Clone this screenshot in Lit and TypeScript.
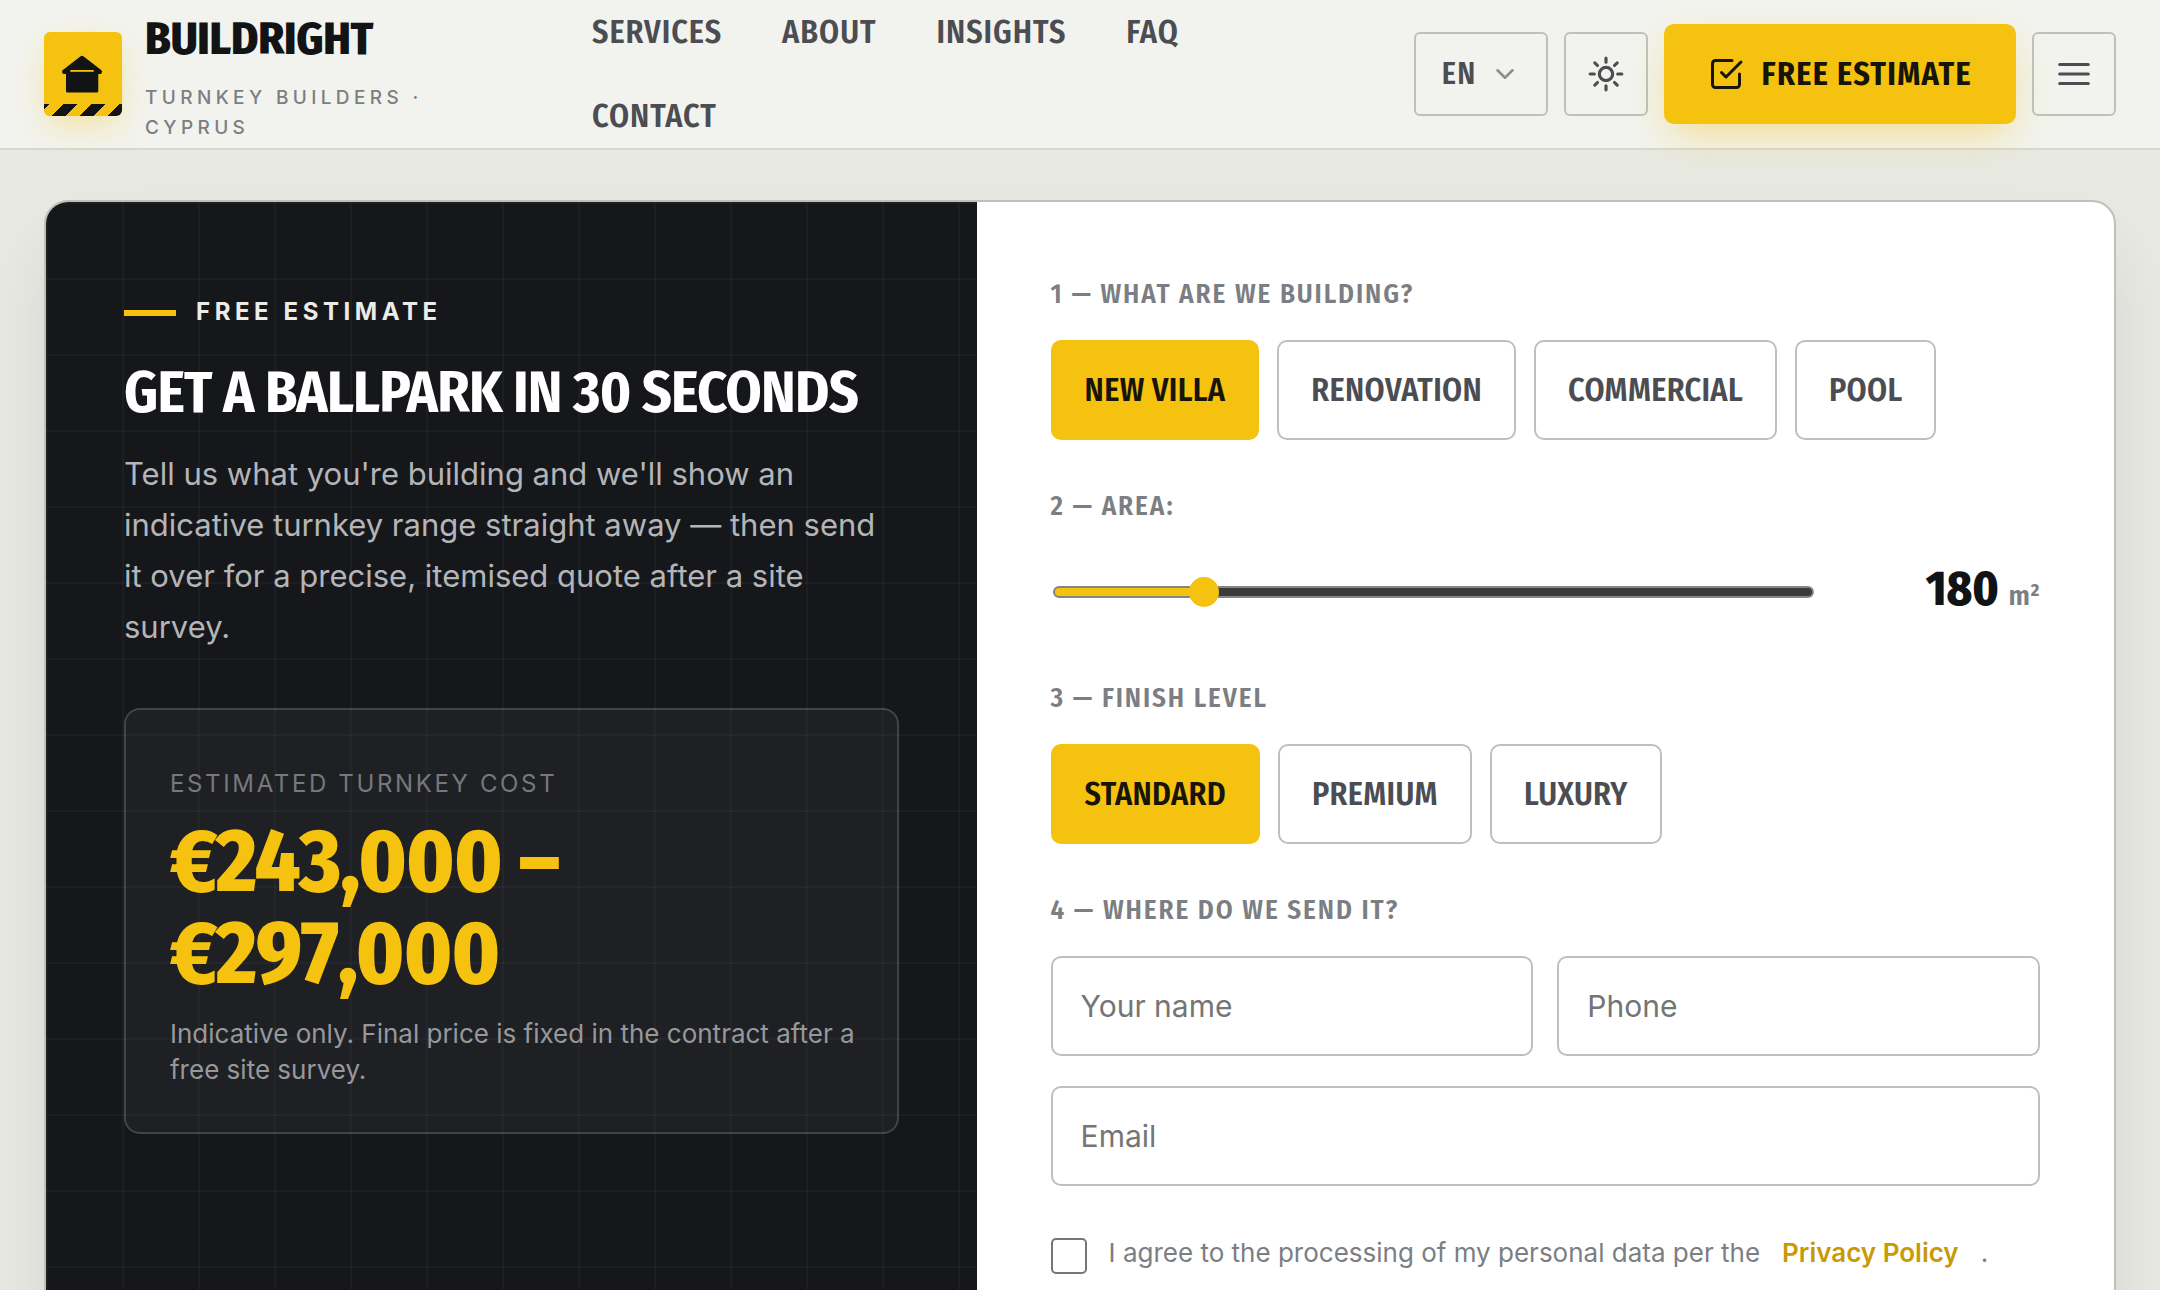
import { LitElement, html, css, svg } from 'lit';
import { customElement, state } from 'lit/decorators.js';
import { classMap } from 'lit/directives/class-map.js';

const KINDS = ['New villa', 'Renovation', 'Commercial', 'Pool'];
const FINISHES = ['Standard', 'Premium', 'Luxury'];
const NAV = ['Services', 'About', 'Insights', 'FAQ', 'Contact'];

const RATES: Record<string, number> = { 'New villa': 1500, Renovation: 900, Commercial: 1300, Pool: 1100 };
const LEVELS: Record<string, number> = { Standard: 1, Premium: 1.35, Luxury: 1.8 };
const MIN_AREA = 40;
const MAX_AREA = 800;

const money = (n: number) => '€' + (Math.round(n / 1000) * 1000).toLocaleString('en-US');

@customElement('site-header')
export class SiteHeader extends LitElement {
  static styles = css`
    :host {
      display: block;
      position: relative;
      z-index: 2;
    }
    * {
      box-sizing: border-box;
    }
    .bar {
      display: flex;
      align-items: center;
      height: 150px;
      padding: 0 44px;
      background: #f2f3ee;
      border-bottom: 2px solid #d7d8d2;
    }
    .brand {
      display: flex;
      align-items: center;
      gap: 23px;
      flex: 0 0 548px;
      color: #121315;
      text-decoration: none;
    }
    .mark {
      position: relative;
      flex: none;
      width: 78px;
      height: 84px;
      border-radius: 6px;
      background: #f5c20f;
      box-shadow: 0 12px 32px -4px rgba(245, 194, 15, 0.35);
    }
    .mark svg {
      display: block;
      width: 78px;
      height: 84px;
    }
    .mark::after {
      content: '';
      position: absolute;
      left: 0;
      right: 0;
      bottom: 0;
      height: 12px;
      border-radius: 0 0 6px 6px;
      background: repeating-linear-gradient(-45deg, #121315 0 10px, #f5c20f 10px 20px);
    }
    .words {
      display: flex;
      flex-direction: column;
      gap: 10px;
      max-width: 290px;
    }
    .name {
      font: 800 46px/68px 'Fira Sans Condensed', sans-serif;
      letter-spacing: -0.005em;
    }
    .tag {
      font: 500 19px/30px Inter, sans-serif;
      letter-spacing: 0.23em;
      color: #7b7e83;
    }
    .nav {
      display: flex;
      flex: 1;
      flex-wrap: wrap;
      column-gap: 60px;
      padding-right: 60px;
      font: 600 32px/84px 'Fira Sans Condensed', sans-serif;
      letter-spacing: 0.03em;
    }
    .nav a {
      color: #4b4d52;
      text-decoration: none;
    }
    .actions {
      display: flex;
      align-items: center;
      gap: 16px;
    }
    button,
    .cta {
      display: flex;
      align-items: center;
      justify-content: center;
      margin: 0;
      font-family: 'Fira Sans Condensed', sans-serif;
      cursor: pointer;
    }
    .tool {
      width: 84px;
      height: 84px;
      padding: 0;
      border: 2px solid #bfc1b8;
      border-radius: 6px;
      background: transparent;
      color: #4b4d52;
    }
    .lang {
      width: auto;
      gap: 13px;
      padding: 0 26px;
      font-size: 30px;
      font-weight: 600;
      letter-spacing: 0.04em;
    }
    .lang svg {
      color: #8b8d90;
    }
    .cta {
      gap: 18px;
      height: 100px;
      padding: 0 44px;
      border-radius: 10px;
      background: #f5c20f;
      box-shadow: 0 16px 40px -8px rgba(245, 194, 15, 0.45);
      color: #17150a;
      font-size: 32px;
      font-weight: 700;
      letter-spacing: 0.04em;
      text-decoration: none;
      white-space: nowrap;
    }
    .up {
      text-transform: uppercase;
    }
    .icon {
      display: block;
      fill: none;
      stroke: currentColor;
      stroke-width: 2;
      stroke-linecap: round;
      stroke-linejoin: round;
    }
  `;

  private icon(size: number, body: unknown) {
    return html`<svg class="icon" width=${size} height=${size} viewBox="0 0 24 24" aria-hidden="true">${body}</svg>`;
  }

  render() {
    return html`
      <header class="bar">
        <a class="brand" href="#top">
          <span class="mark">
            <svg viewBox="0 0 78 84" aria-hidden="true">
              <g fill="#121315" stroke="#121315" stroke-linejoin="round">
                <path d="M38 26 55.800 39.800H20.200Z" stroke-width="4.400" />
                <path d="M23.500 40H52.800V59H23.500Z" stroke-width="3" />
              </g>
              <path d="M26.300 38.900H49.700" stroke="#f5c20f" stroke-width="1.800" />
            </svg>
          </span>
          <span class="words">
            <span class="name up">BuildRight</span>
            <span class="tag up">Turnkey builders · Cyprus</span>
          </span>
        </a>
        <nav class="nav up" aria-label="Main">${NAV.map((n) => html`<a href="#${n.toLowerCase()}">${n}</a>`)}</nav>
        <div class="actions">
          <button class="tool lang" type="button">EN ${this.icon(30, svg`<path d="M6 9l6 6 6-6" />`)}</button>
          <button class="tool" type="button" aria-label="Theme">
            ${this.icon(
              38,
              svg`<circle cx="12" cy="12" r="4.200" /><path d="M12 2v2.600M12 19.400V22M2 12h2.600M19.400 12H22M4.930 4.930l1.700 1.700M17.370 17.370l1.700 1.700M4.930 19.070l1.700-1.700M17.370 6.630l1.700-1.700" />`,
            )}
          </button>
          <a class="cta" href="#estimate">
            ${this.icon(36, svg`<path d="M9 11l3 3L22 4" /><path d="M21 12v7a2 2 0 0 1-2 2H5a2 2 0 0 1-2-2V5a2 2 0 0 1 2-2h11" />`)}
            <span class="up">Free estimate</span>
          </a>
          <button class="tool" type="button" aria-label="Menu">
            ${this.icon(38, svg`<path d="M3 6h18M3 12h18M3 18h18" />`)}
          </button>
        </div>
      </header>
    `;
  }
}

@customElement('app-root')
export class AppRoot extends LitElement {
  static styles = css`
    :host {
      display: block;
      height: 100vh;
      overflow: hidden;
      background: #e8e9e3;
      font-family: Inter, sans-serif;
      color: #121315;
    }
    * {
      box-sizing: border-box;
    }
    .page {
      padding: 50px 44px;
    }
    .card {
      display: grid;
      grid-template-columns: 9fr 11fr;
      border: 2px solid #bfc1b8;
      border-radius: 24px;
      overflow: hidden;
      background: #ffffff;
      box-shadow: 0 36px 80px -10px rgba(20, 22, 26, 0.1);
    }
    .pitch {
      padding: 78px;
      background-color: #16171b;
      background-image: linear-gradient(rgba(255, 255, 255, 0.03) 2px, transparent 2px),
        linear-gradient(90deg, rgba(255, 255, 255, 0.03) 2px, transparent 2px);
      background-size: 76px 76px;
    }
    .eyebrow {
      margin: 0 0 18px;
      font-size: 24px;
      line-height: 64px;
      font-weight: 700;
      letter-spacing: 0.19em;
      text-transform: uppercase;
      color: #ebebe8;
    }
    .eyebrow::before {
      content: '';
      display: inline-block;
      vertical-align: middle;
      width: 52px;
      height: 6px;
      margin-right: 20px;
      background: #f5c20f;
    }
    .title {
      margin: 0 0 24px;
      font: 700 58px/62px 'Fira Sans Condensed', sans-serif;
      letter-spacing: -0.014em;
      text-transform: uppercase;
      color: #ffffff;
    }
    .lead {
      margin: 0 0 56px;
      font-size: 31px;
      line-height: 51px;
      color: #b4b5b8;
    }
    .result {
      padding: 54px 40px 44px 44px;
      border: 2px solid rgba(255, 255, 255, 0.16);
      border-radius: 16px;
      background: rgba(255, 255, 255, 0.04);
    }
    .result-label {
      font-size: 24px;
      line-height: 40px;
      letter-spacing: 0.11em;
      text-transform: uppercase;
      color: #76787d;
    }
    .price {
      display: block;
      margin: 12px 0 16px;
      font: 800 88px/92px 'Fira Sans Condensed', sans-serif;
      letter-spacing: -0.01em;
      color: #f5c20f;
    }
    .note {
      margin: 0;
      font-size: 26px;
      line-height: 36px;
      color: #97989b;
    }
    .form {
      display: flex;
      flex-direction: column;
      gap: 48px;
      padding: 74px;
    }
    .group {
      min-width: 0;
      margin: 0;
      padding: 0;
      border: 0;
    }
    .step {
      display: block;
      padding: 0;
      margin: 0 0 28px;
      font: 600 27px/36px 'Fira Sans Condensed', sans-serif;
      letter-spacing: 0.07em;
      text-transform: uppercase;
      color: #7b7e83;
    }
    .chips {
      display: flex;
      flex-wrap: wrap;
      gap: 18px;
    }
    .chip {
      height: 100px;
      margin: 0;
      padding: 0 32px;
      border: 2px solid #bfc1b8;
      border-radius: 10px;
      background: #ffffff;
      color: #4b4d52;
      font: 600 32px/40px 'Fira Sans Condensed', sans-serif;
      letter-spacing: 0.01em;
      text-transform: uppercase;
      cursor: pointer;
    }
    .chip.on {
      border-color: #f5c20f;
      background: #f5c20f;
      color: #17150a;
    }
    .area {
      display: grid;
      grid-template-columns: 1fr 192px;
      gap: 32px;
      align-items: center;
      height: 80px;
    }
    .range {
      -webkit-appearance: none;
      appearance: none;
      width: auto;
      height: 30px;
      margin: 0 2px;
      background: transparent;
    }
    .range::-webkit-slider-runnable-track {
      height: 12px;
      border: 2px solid #858585;
      border-radius: 6px;
      background: linear-gradient(90deg, #f5c20f var(--fill), #3b3b3b var(--fill));
    }
    .range::-webkit-slider-thumb {
      -webkit-appearance: none;
      width: 30px;
      height: 30px;
      margin-top: -11px;
      border-radius: 50%;
      background: #f5c20f;
    }
    .amount {
      text-align: right;
      font: 800 48px/48px 'Fira Sans Condensed', sans-serif;
    }
    .unit {
      font-size: 28px;
      font-weight: 600;
      color: #7b7e83;
    }
    .fields {
      display: grid;
      grid-template-columns: 1fr 1fr;
      gap: 30px 24px;
    }
    .field {
      width: 100%;
      height: 100px;
      padding: 0 28px;
      border: 2px solid #bfc1b8;
      border-radius: 10px;
      background: #ffffff;
      font: 400 30px/40px Inter, sans-serif;
      color: #121315;
    }
    .field::placeholder {
      color: #757575;
      opacity: 1;
    }
    .wide {
      grid-column: 1 / -1;
    }
    .consent {
      display: flex;
      align-items: flex-start;
      gap: 22px;
      margin-top: 4px;
      font-size: 26px;
      line-height: 30px;
      color: #7b7e83;
    }
    .tick {
      -webkit-appearance: none;
      appearance: none;
      flex: none;
      width: 36px;
      height: 36px;
      margin: 0;
      border: 2px solid #767676;
      border-radius: 5px;
      background: #ffffff;
    }
    .tick:checked {
      background: #f5c20f;
    }
    .policy {
      color: #c79a06;
      font-weight: 600;
      text-decoration: none;
    }
  `;

  @state() private kind = KINDS[0];
  @state() private finish = FINISHES[0];
  @state() private area = 180;

  private get estimate() {
    const base = this.area * RATES[this.kind] * LEVELS[this.finish];
    return `${money(base * 0.9)} – ${money(base * 1.1)}`;
  }

  private chips(options: string[], current: string, pick: (v: string) => void) {
    return html`<div class="chips">
      ${options.map(
        (o) => html`<button
          type="button"
          class=${classMap({ chip: true, on: o === current })}
          aria-pressed=${o === current ? 'true' : 'false'}
          @click=${() => pick(o)}
        >${o}</button>`,
      )}
    </div>`;
  }

  render() {
    const ratio = (this.area - MIN_AREA) / (MAX_AREA - MIN_AREA);
    return html`
      <site-header></site-header>
      <main class="page">
        <section class="card" id="estimate">
          <div class="pitch">
            <p class="eyebrow">Free estimate</p>
            <h2 class="title">Get a ballpark in 30 seconds</h2>
            <p class="lead">
              Tell us what you're building and we'll show an indicative turnkey range straight away — then send it over
              for a precise, itemised quote after a site survey.
            </p>
            <div class="result">
              <div class="result-label">Estimated turnkey cost</div>
              <output class="price">${this.estimate}</output>
              <p class="note">Indicative only. Final price is fixed in the contract after a free site survey.</p>
            </div>
          </div>
          <form class="form">
            <fieldset class="group">
              <legend class="step">1 — What are we building?</legend>
              ${this.chips(KINDS, this.kind, (v) => (this.kind = v))}
            </fieldset>
            <div class="group">
              <label class="step" for="area">2 — Area:</label>
              <div class="area">
                <input
                  class="range"
                  id="area"
                  type="range"
                  min=${MIN_AREA}
                  max=${MAX_AREA}
                  step="10"
                  .value=${String(this.area)}
                  style="--fill: calc(15px + (100% - 30px) * ${ratio})"
                  @input=${(e: Event) => (this.area = Number((e.target as HTMLInputElement).value))}
                />
                <output class="amount" for="area">${this.area} <span class="unit">m²</span></output>
              </div>
            </div>
            <fieldset class="group">
              <legend class="step">3 — Finish level</legend>
              ${this.chips(FINISHES, this.finish, (v) => (this.finish = v))}
            </fieldset>
            <fieldset class="group">
              <legend class="step">4 — Where do we send it?</legend>
              <div class="fields">
                <input class="field" type="text" placeholder="Your name" aria-label="Your name" />
                <input class="field" type="tel" placeholder="Phone" aria-label="Phone" />
                <input class="field wide" type="email" placeholder="Email" aria-label="Email" />
              </div>
            </fieldset>
            <div class="consent">
              <input class="tick" type="checkbox" id="agree" />
              <label for="agree">I agree to the processing of my personal data per the</label>
              <a class="policy" href="#privacy">Privacy Policy</a>
              <span>.</span>
            </div>
          </form>
        </section>
      </main>
    `;
  }
}
